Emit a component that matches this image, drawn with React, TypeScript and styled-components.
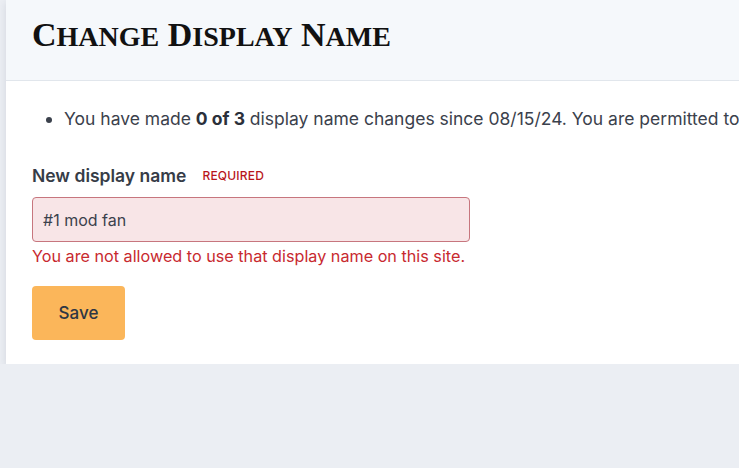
import styled, { createGlobalStyle } from 'styled-components';

const GlobalStyle = createGlobalStyle`
    html, body {
        margin: 0;
        padding: 0;
        background: #ebeef3;
        overflow: hidden;
    }
    body {
        font-family: Inter, "Liberation Sans", sans-serif;
        color: #3b414c;
    }
`

const Card = styled.div`
    width: 1100px;
    margin-left: 6px;
    background: #ffffff;
    box-shadow: 0 3px 8px rgba(40, 50, 70, 0.12);
`

const Header = styled.div`
    box-sizing: border-box;
    height: 81px;
    padding: 18px 26px 0;
    background: #f5f8fb;
    border-bottom: 1px solid #e1e6ec;
`

const Title = styled.h1`
    margin: 0;
    font-family: "Liberation Serif", "DejaVu Serif", serif;
    font-weight: bold;
    font-size: 34px;
    line-height: 34px;
    text-transform: uppercase;
    color: #111111;

    .rest {
        font-size: 28px;
    }
`

const Body = styled.div`
    padding: 26px 26px 24px;
`

const Notes = styled.ul`
    margin: 0 0 33px;
    padding-left: 32px;
    font-size: 17.5px;
    line-height: 24px;
    white-space: nowrap;

    b {
        font-weight: 700;
        color: #2b303a;
    }
`

const Label = styled.label`
    display: flex;
    align-items: center;
    gap: 16px;
    font-size: 17.5px;
    line-height: 24px;
    font-weight: 600;
    color: #363c47;
    margin-bottom: 9px;
`

const Required = styled.span`
    font-size: 12px;
    font-weight: 500;
    color: #b8161c;
    letter-spacing: 0.2px;
`

const Input = styled.input<{ $invalid?: boolean }>`
    box-sizing: border-box;
    display: block;
    width: 438px;
    height: 45px;
    padding: 0 10px;
    font-family: inherit;
    font-size: 16px;
    color: #3b414c;
    background: ${p => p.$invalid ? '#f8e5e7' : '#ffffff'};
    border: 1px solid ${p => p.$invalid ? '#c7767e' : '#cfd5dd'};
    border-radius: 4px;
    outline: none;
`

const Error = styled.div`
    font-size: 16.2px;
    line-height: 24px;
    color: #c8292f;
    margin: 2px 0 18px;
`

const Button = styled.button`
    width: 93px;
    height: 54px;
    border: none;
    border-radius: 4px;
    background: #fbb65a;
    font-family: inherit;
    font-size: 17px;
    font-weight: 500;
    color: #2e3644;
    cursor: pointer;
`

const App = () => {
    const title = ['Change', 'Display', 'Name']

    return(
        <>
            <GlobalStyle />
            <Card>
                <Header>
                    <Title>
                        {title.map((word, i) => (
                            <span key={i}>
                                {word[0]}<span className='rest'>{word.slice(1)}</span>{i < title.length - 1 ? ' ' : ''}
                            </span>
                        ))}
                    </Title>
                </Header>
                <Body>
                    <Notes>
                        <li>You have made <b>0 of 3</b> display name changes since 08/15/24. You are permitted to change your display name 3 times within a 30 day period.</li>
                    </Notes>
                    <Label htmlFor='display-name'>
                        New display name
                        <Required>REQUIRED</Required>
                    </Label>
                    <Input id='display-name' type='text' defaultValue='#1 mod fan' $invalid />
                    <Error>You are not allowed to use that display name on this site.</Error>
                    <Button type='button'>Save</Button>
                </Body>
            </Card>
        </>
    )
}

export default App
